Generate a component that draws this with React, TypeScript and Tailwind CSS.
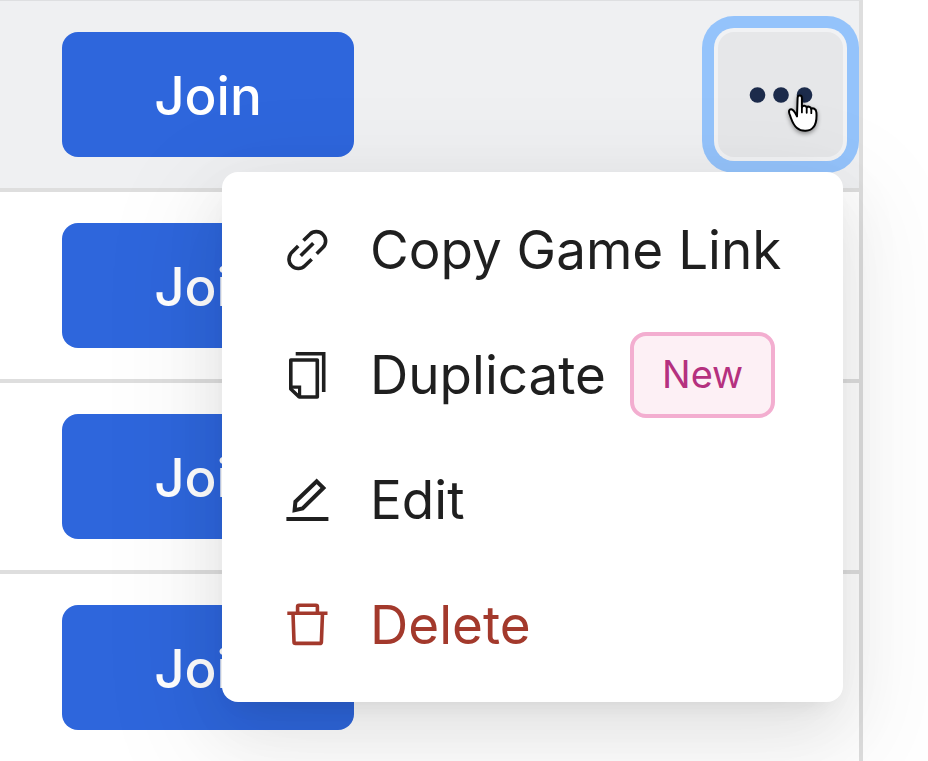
import type { ReactNode } from 'react'
import { clsx } from 'clsx'

const games = [
  { id: 1, active: true },
  { id: 2, active: false },
  { id: 3, active: false },
  { id: 4, active: false }
]

const Icon = ({ children }: { children: ReactNode }) => (
  <svg
    viewBox="0 0 48 48"
    fill="none"
    stroke="currentColor"
    strokeWidth="3.6"
    className="size-12 shrink-0"
    aria-hidden="true"
  >
    {children}
  </svg>
)

const LinkIcon = () => (
  <Icon>
    <path d="M19.5 14.6 25.7 8.4A9.3 9.3 0 0 1 38.9 21.6L32.7 27.8" />
    <path d="M14.2 20 7.7 26.6A9.3 9.3 0 0 0 20.9 39.8L27.7 33.2" />
    <path d="M16.7 29.7 29.3 17.3" />
  </Icon>
)

const DuplicateIcon = () => (
  <Icon>
    <path d="M11.7 2.7H39.7V41" />
    <path d="M6.8 9H33.3V46H15.2L6.8 38Z" strokeLinejoin="round" />
    <path d="M6.8 36.2H15.6V46" strokeWidth="3.2" />
  </Icon>
)

const EditIcon = () => (
  <Icon>
    <path d="M32.7 5.4 39.4 12 18.6 32.4 10.6 34.2 11.4 25.8Z" strokeWidth="4" />
    <path d="M2.4 43H44.4" strokeWidth="4" />
  </Icon>
)

const DeleteIcon = () => (
  <Icon>
    <path d="M3.3 12.2H43.5" />
    <path d="M13.6 12V5.8Q13.6 4.3 15.1 4.3H31.9Q33.4 4.3 33.4 5.8V12" />
    <path d="M9 12.2 10 41Q10 42.4 11.5 42.4H35.8Q37.3 42.4 37.4 41L38.5 12.2" />
  </Icon>
)

const menuItems = [
  { label: 'Copy Game Link', icon: <LinkIcon /> },
  { label: 'Duplicate', icon: <DuplicateIcon />, badge: 'New' },
  { label: 'Edit', icon: <EditIcon /> },
  { label: 'Delete', icon: <DeleteIcon />, danger: true }
]

const GameMenu = () => (
  <ul
    role="menu"
    className="absolute top-full right-0 z-10 mt-[15px] w-[621px] rounded-2xl bg-white py-[15px] shadow-[0_24px_64px_0_rgba(0,0,0,0.08),0_12px_24px_-16px_rgba(0,0,0,0.12),0_36px_112px_32px_rgba(0,0,0,0.05)]"
  >
    {menuItems.map(item => (
      <li key={item.label} role="none">
        <button
          type="button"
          role="menuitem"
          className={clsx(
            'flex h-[125px] w-full items-center pl-[62px] text-[53px] whitespace-nowrap',
            item.danger ? 'text-[#a3392c]' : 'text-[#1f1f1f]'
          )}
        >
          {item.icon}
          <span className="ml-[38px] pt-0.5">{item.label}</span>
          {item.badge && (
            <span className="ml-6 flex h-[86px] items-center rounded-2xl border-4 border-[#f3aed0] bg-[#fdf0f5] px-7 text-[38px] text-[#b5317f]">
              {item.badge}
            </span>
          )}
        </button>
      </li>
    ))}
  </ul>
)

// pointing hand that sits on the last dot
const HandCursor = () => (
  <svg
    viewBox="0 0 34 42"
    className="pointer-events-none absolute top-[60px] left-[68px] z-20 h-[42px] w-[34px] drop-shadow-[0_2px_2px_rgba(0,0,0,0.4)]"
    aria-hidden="true"
  >
    <path
      d="M11.6 6C11.6 4.3 12.6 3.6 13.7 3.6S15.9 4.3 15.9 6V15.2C16.4 13.3 20.2 13.2 20.7 15.6 21.6 14 24.8 14.4 25.3 17 26.6 15.7 30.2 16.4 30.4 20.5 30.8 26.5 30.5 32 27.3 35.3 24.3 39.6 15.5 40 11 36 6.5 32.3 6 28.5 3.5 22 2.4 18.8 3.4 17 5.2 17.2 8.2 17.6 9.5 21.5 11 24.4Z"
      fill="#fff"
      stroke="#000"
      strokeWidth="2"
      strokeLinejoin="round"
    />
    <path
      d="M15.9 14V20.4M20.7 15.4V20.8M25.3 16.8V21.2"
      stroke="#000"
      strokeWidth="1.8"
      strokeLinecap="round"
    />
  </svg>
)

const MoreButton = ({ active }: { active: boolean }) => (
  <button
    type="button"
    aria-label="More actions"
    aria-haspopup="menu"
    aria-expanded={active}
    className={clsx(
      'flex size-[125px] items-center justify-center rounded-2xl',
      active &&
        'bg-[#e6e7e9] ring-12 ring-[#94c3fb] ring-offset-4 ring-offset-[#f1f2f4]'
    )}
  >
    <svg viewBox="0 0 64 16" className="h-4 w-16 fill-[#1c2b4b]">
      <circle cx="8.5" cy="8" r="7.8" />
      <circle cx="32" cy="8" r="7.8" />
      <circle cx="55.5" cy="8" r="7.8" />
    </svg>
  </button>
)

export default function App() {
  return (
    <main className="overflow-hidden bg-white pr-[65px] font-[Inter,'Liberation_Sans',sans-serif]">
      <ul className="border-t border-r-4 border-t-[#dedfe1] border-r-[#dedede]">
        {games.map(game => (
          <li
            key={game.id}
            className={clsx(
              'flex items-center justify-between border-b-4 border-[#dedede] py-[31px] pr-4 pl-[62px] last:border-b-0',
              game.active && 'bg-[#eff0f2]'
            )}
          >
            <button
              type="button"
              className="h-[125px] w-[292px] rounded-2xl bg-[#2e66dc] pt-1 text-[53px] font-medium text-white"
            >
              Join
            </button>
            <div className="relative">
              <MoreButton active={game.active} />
              {game.active && (
                <>
                  <GameMenu />
                  <HandCursor />
                </>
              )}
            </div>
          </li>
        ))}
      </ul>
    </main>
  )
}
